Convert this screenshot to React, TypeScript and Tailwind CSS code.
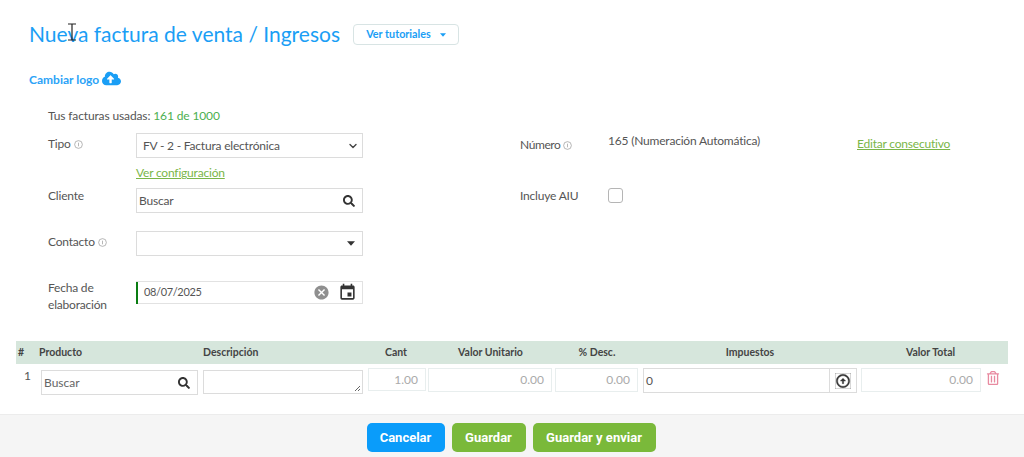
import React from "react";
import { FaCloudUploadAlt, FaSearch, FaRegTrashAlt } from "react-icons/fa";
import { MdEvent, MdCancel, MdOutlineArrowCircleUp } from "react-icons/md";
import { ChevronDown } from "lucide-react";

const Info = () => (
  <svg width="9" height="9" viewBox="0 0 10 10" className="inline-block ml-[3px] text-[#9a9a9a]" fill="none" stroke="currentColor" strokeWidth="0.8">
    <circle cx="5" cy="5" r="4.3" />
    <path d="M5 3v4" />
  </svg>
);

const Caret = ({ className = "" }: { className?: string }) => (
  <svg width="9" height="5" viewBox="0 0 9 5" className={className} fill="currentColor">
    <path d="M0 0h9L4.500 5z" />
  </svg>
);

const Mag = () => <FaSearch size={12} className="text-[#333]" />;

const Th = ({ w, align = "text-center", children }: { w: string; align?: string; children?: React.ReactNode }) => (
  <div className={`${w} ${align} shrink-0`}>{children}</div>
);

export default function App() {
  return (
    <div className="relative w-[1024px] h-[457px] overflow-hidden bg-white flex flex-col font-['Lato','Noto_Sans',sans-serif] text-[12px] tracking-[-0.2px] text-[#555]">
      {/* text cursor of the capture */}
      <svg width="10" height="18" viewBox="0 0 10 18" className="absolute left-[67px] top-[23px] text-[#222]" fill="none" stroke="currentColor" strokeWidth="1.2">
        <path d="M1 1h8M5 1v16M1 17h8" />
      </svg>

      <main className="flex-1 flex flex-col">
        <div className="flex items-center pl-[29px] pt-[24px] h-[45px]">
          <h1 className="-mt-[2px] text-[21px] leading-[21px] text-[#1a9ef5] tracking-normal">Nueva factura de venta / Ingresos</h1>
          <button className="ml-[13px] w-[106px] h-[21px] border border-[#d8e4e4] rounded-[4px] flex items-center justify-center gap-[9px] text-[10.800px] font-bold text-[#1a9ef5] tracking-normal">
            Ver tutoriales
            <Caret className="w-[6px] h-[4px]" />
          </button>
        </div>

        <div className="flex items-center pl-[29px] mt-[25px] h-[20px] text-[12px] font-bold text-[#2ba3f7] tracking-normal">
          Cambiar logo
          <FaCloudUploadAlt size={19} className="ml-[3px] -mt-[3px] text-[#1a9ef5]" />
        </div>

        <div className="pl-[48px] mt-[18px] leading-[16px] tracking-[-0.13px]">
          Tus facturas usadas: <span className="text-[#4caf50]">161 de 1000</span>
        </div>

        <div className="flex mt-[9px] pl-[48px]">
          {/* left column */}
          <div className="w-[315px] flex flex-col">
            <div className="flex h-[25px]">
              <div className="w-[88px] leading-[22px]">Tipo<Info /></div>
              <div className="w-[227px] h-[25px] border border-[#dcdcdc] flex items-center justify-between pl-[6px] pr-[3px] text-[#555]">
                FV - 2 - Factura electrónica
                <ChevronDown size={12} strokeWidth={2.800} className="text-[#444]" />
              </div>
            </div>
            <div className="pl-[88px] mt-[6px] h-[18px] leading-[18px] text-[#7ab648] underline">Ver configuración</div>
            <div className="flex h-[25px] mt-[6px]">
              <div className="w-[88px] leading-[16px]">Cliente</div>
              <div className="w-[227px] h-[25px] border border-[#dcdcdc] flex items-center justify-between pl-[2px] pr-[7px]">
                Buscar
                <Mag />
              </div>
            </div>
            <div className="flex h-[25px] mt-[18px]">
              <div className="w-[88px] leading-[22px]">Contacto<Info /></div>
              <div className="w-[227px] h-[25px] border border-[#dcdcdc] flex items-center justify-end pr-[7px]">
                <Caret className="w-[8px] h-[5px] text-[#333]" />
              </div>
            </div>
            <div className="flex mt-[25px]">
              <div className="w-[88px] -mt-[2px] leading-[17px]">Fecha de<br />elaboración</div>
              <div className="w-[227px] h-[23px] border border-[#e2e2e2] border-l-0 flex items-center">
                <div className="w-[2px] h-[22px] bg-[#0a7d12]" />
                <span className="ml-[6px] flex-1 text-[11px] tracking-[-0.35px]">08/07/2025</span>
                <MdCancel size={17} className="mr-[8px] text-[#8f8f8f]" />
                <MdEvent size={19} className="mr-[5px] text-[#333]" />
              </div>
            </div>
          </div>

          {/* right column */}
          <div className="ml-[157px] flex flex-col">
            <div className="flex h-[25px]">
              <div className="w-[88px] mt-[4px] leading-[16px] tracking-[-0.4px]">Número<Info /></div>
              <div className="w-[249px] leading-[16px] text-[#555]">165 (Numeración Automática)</div>
              <div className="mt-[3px] leading-[16px] text-[#7ab648] underline">Editar consecutivo</div>
            </div>
            <div className="flex mt-[30px]">
              <div className="w-[88px] leading-[16px]">Incluye AIU</div>
              <div className="w-[15px] h-[15px] border border-[#b5b5b5] rounded-[3px] bg-white" />
            </div>
          </div>
        </div>

        {/* lines table */}
        <div className="mx-[16px] mt-[28px] w-[992px] tracking-normal">
          <div className="flex h-[23px] items-center bg-[#d6e6dc] text-[10.500px] font-bold text-[#444]">
            <Th w="w-[23px] pl-[2px]" align="text-left">#</Th>
            <Th w="w-[164px]" align="text-left">Producto</Th>
            <Th w="w-[165px]" align="text-left">Descripción</Th>
            <Th w="w-[56px]">Cant</Th>
            <Th w="w-[133px]">Valor Unitario</Th>
            <Th w="w-[80px]">% Desc.</Th>
            <Th w="w-[226px]">Impuestos</Th>
            <Th w="w-[135px]">Valor Total</Th>
          </div>
          <div className="flex mt-[4px] items-start text-[#aaa]">
            <div className="w-[25px] pl-[8px] pt-[1px] leading-[14px] text-[#555]">1</div>
            <div className="w-[157px] h-[25px] mt-[2px] border border-[#dcdcdc] flex items-center justify-between pl-[2px] pr-[7px] text-[#666]">
              Buscar
              <Mag />
            </div>
            <div className="relative w-[160px] h-[24px] ml-[5px] mt-[2px] border border-[#dcdcdc]">
              <svg width="7" height="7" viewBox="0 0 7 7" className="absolute right-[1px] bottom-[1px] text-[#666]" stroke="currentColor" fill="none">
                <path d="M1 6l5-5M4 6l2-2" />
              </svg>
            </div>
            <div className="w-[58px] h-[23px] ml-[5px] border border-[#e8eeee] flex items-center justify-end pr-[7px]">1.00</div>
            <div className="w-[124px] h-[24px] ml-[2px] border border-[#e8eeee] flex items-center justify-end pr-[7px]">0.00</div>
            <div className="w-[83px] h-[24px] ml-[3px] border border-[#e8eeee] flex items-center justify-end pr-[7px]">0.00</div>
            <div className="w-[214px] h-[25px] ml-[5px] border border-[#dcdcdc] flex items-center text-[#555]">
              <span className="flex-1 pl-[2px]">0</span>
              <div className="w-[27px] h-full border-l border-[#dcdcdc] flex items-center justify-center">
                <MdOutlineArrowCircleUp size={16} className="text-[#333] stroke-current stroke-[0.6]" />
              </div>
            </div>
            <div className="w-[120px] h-[24px] ml-[4px] border border-[#e8eeee] flex items-center justify-end pr-[7px]">0.00</div>
            <FaRegTrashAlt size={14} className="ml-[5px] mt-[3px] text-[#e88aa0]" />
          </div>
        </div>
      </main>

      <footer className="h-[43px] shrink-0 bg-[#f5f5f5] border-t border-[#ececec] flex justify-center gap-[7px] pt-[8px] pr-[2px] font-['Roboto',sans-serif] text-[13px] font-bold text-white tracking-normal">
        <button className="w-[78px] h-[29px] rounded-[5px] bg-[#0a9cfa]">Cancelar</button>
        <button className="w-[74px] h-[29px] rounded-[5px] bg-[#7ab93a]">Guardar</button>
        <button className="w-[123px] h-[29px] rounded-[5px] bg-[#7ab93a]">Guardar y enviar</button>
      </footer>
    </div>
  );
}
